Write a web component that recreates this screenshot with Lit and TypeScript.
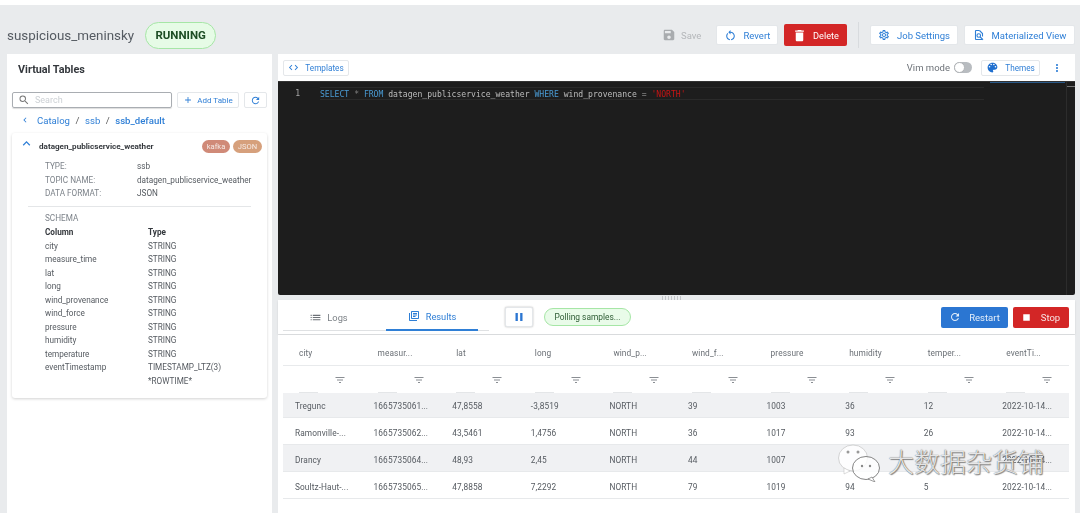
import { LitElement, html, css, svg } from "lit";
import { customElement } from "lit/decorators.js";

const P = {
  save: "M17 3H5c-1.11 0-2 .9-2 2v14c0 1.1.89 2 2 2h14c1.1 0 2-.9 2-2V7l-4-4zm-5 16c-1.66 0-3-1.34-3-3s1.34-3 3-3 3 1.34 3 3-1.34 3-3 3zm3-10H5V5h10v4z",
  del: "M6 19c0 1.1.9 2 2 2h8c1.1 0 2-.9 2-2V7H6v12zM19 4h-3.5l-1-1h-5l-1 1H5v2h14V4z",
  refresh: "M17.65 6.35C16.2 4.9 14.21 4 12 4c-4.42 0-7.99 3.58-7.99 8s3.57 8 7.99 8c3.73 0 6.84-2.55 7.73-6h-2.08c-.82 2.33-3.04 4-5.65 4-3.31 0-6-2.69-6-6s2.69-6 6-6c1.66 0 3.14.69 4.22 1.78L13 11h7V4l-2.35 2.35z",
  revert: "M12 5V2L8 6l4 4V7c3.31 0 6 2.69 6 6 0 2.97-2.17 5.43-5 5.91v2.02c3.95-.49 7-3.85 7-7.93 0-4.42-3.58-8-8-8zm-6 8c0-1.65.67-3.15 1.76-4.24L6.34 7.34A7.96 7.96 0 0 0 4 13c0 4.08 3.05 7.44 7 7.93v-2.02c-2.83-.48-5-2.94-5-5.91z",
  gear: "M19.43 12.98c.04-.32.07-.64.07-.98 0-.34-.03-.66-.07-.98l2.11-1.65c.19-.15.24-.42.12-.64l-2-3.46a.5.5 0 0 0-.61-.22l-2.49 1c-.52-.4-1.08-.73-1.69-.98l-.38-2.65A.488.488 0 0 0 14 2h-4c-.25 0-.46.18-.49.42l-.38 2.65c-.61.25-1.17.59-1.69.98l-2.49-1a.566.566 0 0 0-.18-.03c-.17 0-.34.09-.43.25l-2 3.46c-.13.22-.07.49.12.64l2.11 1.65c-.04.32-.07.65-.07.98 0 .33.03.66.07.98l-2.11 1.65c-.19.15-.24.42-.12.64l2 3.46a.5.5 0 0 0 .61.22l2.49-1c.52.4 1.08.73 1.69.98l.38 2.65c.03.24.24.42.49.42h4c.25 0 .46-.18.49-.42l.38-2.65c.61-.25 1.17-.59 1.69-.98l2.49 1c.06.02.12.03.18.03.17 0 .34-.09.43-.25l2-3.46c.12-.22.07-.49-.12-.64l-2.11-1.65zm-1.98-1.71c.04.31.05.52.05.73 0 .21-.02.43-.05.73l-.14 1.13.89.7 1.08.84-.7 1.21-1.27-.51-1.04-.42-.9.68c-.43.32-.84.56-1.25.73l-1.06.43-.16 1.13-.2 1.35h-1.4l-.19-1.35-.16-1.13-1.06-.43c-.43-.18-.83-.41-1.23-.71l-.91-.7-1.06.43-1.27.51-.7-1.21 1.08-.84.89-.7-.14-1.13c-.03-.31-.05-.54-.05-.74s.02-.43.05-.73l.14-1.13-.89-.7-1.08-.84.7-1.21 1.27.51 1.04.42.9-.68c.43-.32.84-.56 1.25-.73l1.06-.43.16-1.13.2-1.35h1.39l.19 1.35.16 1.13 1.06.43c.43.18.83.41 1.23.71l.91.7 1.06-.43 1.27-.51.7 1.21-1.07.85-.89.7.14 1.13zM12 8c-2.21 0-4 1.79-4 4s1.79 4 4 4 4-1.79 4-4-1.79-4-4-4zm0 6c-1.1 0-2-.9-2-2s.9-2 2-2 2 .9 2 2-.9 2-2 2z",
  palette: "M12 3c-4.97 0-9 4.03-9 9s4.03 9 9 9c.83 0 1.5-.67 1.5-1.5 0-.39-.15-.74-.39-1.01-.23-.26-.38-.61-.38-.99 0-.83.67-1.5 1.5-1.5H16c2.76 0 5-2.24 5-5 0-4.42-4.03-8-9-8zm-5.5 9c-.83 0-1.5-.67-1.5-1.5S5.67 9 6.5 9 8 9.67 8 10.5 7.33 12 6.5 12zm3-4C8.67 8 8 7.33 8 6.5S8.67 5 9.5 5s1.5.67 1.5 1.5S10.33 8 9.5 8zm5 0c-.83 0-1.5-.67-1.5-1.5S13.67 5 14.5 5s1.5.67 1.5 1.5S15.33 8 14.5 8zm3 4c-.83 0-1.5-.67-1.5-1.5S16.67 9 17.5 9s1.5.67 1.5 1.5-.67 1.5-1.5 1.5z",
  code: "M9.4 16.6L4.8 12l4.6-4.6L8 6l-6 6 6 6 1.4-1.4zm5.2 0l4.6-4.6-4.6-4.6L16 6l6 6-6 6-1.4-1.4z",
  more: "M12 8c1.1 0 2-.9 2-2s-.9-2-2-2-2 .9-2 2 .9 2 2 2zm0 2c-1.1 0-2 .9-2 2s.9 2 2 2 2-.9 2-2-.9-2-2-2zm0 6c-1.1 0-2 .9-2 2s.9 2 2 2 2-.9 2-2-.9-2-2-2z",
  list: "M3 13h2v-2H3v2zm0 4h2v-2H3v2zm0-8h2V7H3v2zm4 4h14v-2H7v2zm0 4h14v-2H7v2zM7 7v2h14V7H7z",
  books: "M4 6H2v14c0 1.1.9 2 2 2h14v-2H4V6zm16-4H8c-1.1 0-2 .9-2 2v12c0 1.1.9 2 2 2h12c1.1 0 2-.9 2-2V4c0-1.1-.9-2-2-2zm0 14H8V4h12v12zM10 9h8v2h-8zm0 3h5v2h-5zm0-6h8v2h-8z",
  filter: "M10 18h4v-2h-4v2zM3 6v2h18V6H3zm3 7h12v-2H6v2z",
  search: "M15.5 14h-.79l-.28-.27A6.47 6.47 0 0 0 16 9.5 6.5 6.5 0 1 0 9.5 16c1.61 0 3.09-.59 4.23-1.57l.27.28v.79l5 4.99L20.49 19l-4.99-5zm-6 0C7.01 14 5 11.99 5 9.5S7.01 5 9.5 5 14 7.01 14 9.5 11.99 14 9.5 14z",
  plus: "M19 13h-6v6h-2v-6H5v-2h6V5h2v6h6v2z",
  left: "M15.41 7.41L14 6l-6 6 6 6 1.41-1.41L10.83 12z",
  up: "M12 8l-6 6 1.41 1.41L12 10.83l4.59 4.58L18 14z",
  pause: "M6 19h4V5H6v14zm8-14v14h4V5h-4z",
  stop: "M6 6h12v12H6z",
};

const icon = (d: string, size: number, color: string) => html`<svg class="ic" width=${size} height=${size} viewBox="0 0 24 24" fill=${color}>${svg`<path d=${d}></path>`}</svg>`;

const BLUE = "#2f7fd6";
const SCHEMA = [
  ["city", "STRING"], ["measure_time", "STRING"], ["lat", "STRING"], ["long", "STRING"],
  ["wind_provenance", "STRING"], ["wind_force", "STRING"], ["pressure", "STRING"],
  ["humidity", "STRING"], ["temperature", "STRING"], ["eventTimestamp", "TIMESTAMP_LTZ(3)"], ["", "*ROWTIME*"],
];
const COLS = ["city", "measur...", "lat", "long", "wind_p...", "wind_f...", "pressure", "humidity", "temper...", "eventTi..."];
const ROWS = [
  ["Tregunc", "1665735061...", "47,8558", "-3,8519", "NORTH", "39", "1003", "36", "12", "2022-10-14..."],
  ["Ramonville-...", "1665735062...", "43,5461", "1,4756", "NORTH", "36", "1017", "93", "26", "2022-10-14..."],
  ["Drancy", "1665735064...", "48,93", "2,45", "NORTH", "44", "1007", "", "", "2022-10-14..."],
  ["Soultz-Haut-...", "1665735065...", "47,8858", "7,2292", "NORTH", "79", "1019", "94", "5", "2022-10-14..."],
];

@customElement("app-root")
export class AppRoot extends LitElement {
  static styles = css`
    :host { display: block; width: 1080px; height: 513px; overflow: hidden; background: #fff; font-family: Roboto, "Noto Sans", sans-serif; color: #3c4148; position: relative; }
    * { box-sizing: border-box; }
    .ic { display: block; flex: none; }
    .page { margin-top: 5px; height: 508px; background: #e9ebed; padding: 0 5px 0 7px; display: flex; flex-direction: column; filter: blur(0.5px); }
    .head { height: 49px; flex: none; display: flex; align-items: center; padding-top: 11px; }
    .title { font-size: 13.4px; color: #555b62; }
    .running { margin-left: 11px; width: 71px; height: 27px; border: 1px solid #a6e6a6; background: #e6fbe6; border-radius: 14px; color: #1d4d24; font-weight: 700; font-size: 11.5px; display: flex; align-items: center; justify-content: center; }
    .spacer { flex: 1; }
    .btn { display: flex; align-items: center; justify-content: center; gap: 7px; background: #fff; color: #2f7fd6; font-size: 9.5px; border-radius: 2px; height: 20px; border: 1px solid #e4e7ea; }
    .save { color: #b4b7ba; font-size: 9.5px; display: flex; align-items: center; gap: 5px; width: 54px; }
    .revert { width: 62px; }
    .delete { width: 63px; height: 22px; margin-left: 6px; background: #d32626; color: #fff; border: none; gap: 6px; }
    .delete span { font-size: 9.2px; }
    .vr { width: 1px; height: 26px; background: #d8dbde; margin: 0 11px; }
    .job { width: 88px; }
    .mat { width: 111px; margin-left: 6px; }
    .body { flex: 1; min-height: 0; display: grid; grid-template-columns: 265px 797px; gap: 6px; }
    .left { background: #fff; padding: 0 5px; display: flex; flex-direction: column; }
    .vt { font-size: 10.8px; font-weight: 700; color: #33373c; padding: 9px 6px 0; height: 38px; }
    .searchrow { display: flex; gap: 5px; height: 16px; }
    .search { width: 160px; border: 1px solid #a9adb2; border-radius: 2px; box-shadow: 0 1px 1px #ddd; display: flex; align-items: center; padding-left: 5px; gap: 5px; color: #ccd0d4; font-size: 9px; }
    .searchrow .btn { height: 16px; font-size: 8px; gap: 4px; }
    .add { width: 62px; } .rf { width: 23px; }
    .crumbs { display: flex; align-items: center; height: 24px; color: #2f7fd6; font-size: 9.6px; padding-left: 8px; }
    .crumbs .sep { color: #555; margin: 0 5.5px; }
    .crumbs b { font-weight: 500; }
    .card { margin-top: 1px; height: 265px; border-radius: 3px; box-shadow: 0 1px 3px rgba(0,0,0,.18); padding: 0 5px 0 8px; font-size: 8.2px; color: #555a60; }
    .cardhead { display: flex; align-items: center; height: 26px; }
    .cardhead .chev { margin: -6px -1px 0 -1px; }
    .cardhead .nm { font-weight: 700; color: #34383d; margin-left: 6px; font-size: 8.1px; flex: 1; }
    .pill { height: 13px; border-radius: 7px; color: #f5e9e4; font-size: 7.6px; display: flex; align-items: center; justify-content: center; }
    .kafka { background: #d08a78; width: 28px; margin-right: 3px; }
    .json { background: #d6a07c; width: 29px; }
    .meta { display: grid; grid-template-columns: 92px 1fr; padding: 1px 0 0 25px; line-height: 13.5px; }
    .meta .k { color: #7d838a; }
    .hr { height: 1px; background: #e4e6e8; margin: 5px 11px 0 8px; }
    .schema { color: #7d838a; padding: 5px 0 1px 25px; line-height: 13.5px; }
    .stbl { display: grid; grid-template-columns: 103px 1fr; padding-left: 25px; line-height: 13.55px; }
    .stbl .hd { font-weight: 700; color: #34383d; }
    .right { display: flex; flex-direction: column; min-height: 0; }
    .bar { height: 27px; flex: none; background: #fff; display: flex; align-items: center; padding: 0 5px; }
    .bar .btn { height: 16px; font-size: 8.2px; gap: 6px; }
    .tpl { width: 66px; }
    .vim { font-size: 9.5px; color: #6d7278; margin-right: 4px; }
    .toggle { width: 18px; height: 11px; border-radius: 6px; background: #b8bcc0; position: relative; margin-right: 9px; }
    .toggle i { position: absolute; left: 0; top: 0; width: 11px; height: 11px; border-radius: 50%; background: #fff; border: 1px solid #b0b3b6; }
    .themes { width: 59px; }
    .dots { margin: 0 7px 0 11px; }
    .editor { height: 214px; flex: none; background: #1d1d1d; display: flex; border-top: 1px solid #333; border-radius: 0 0 2px 2px; position: relative; font-family: "DejaVu Sans Mono", "Liberation Mono", monospace; font-size: 8.1px; }
    .ln { width: 42px; text-align: right; padding: 6px 20px 0 0; color: #a8a8a8; line-height: 11px; flex: none; }
    .code { width: 664px; height: 13px; margin-top: 5px; border-top: 1px solid #2a2a2a; border-bottom: 1px solid #2a2a2a; color: #bcbcbc; line-height: 12px; white-space: pre; }
    .kw { color: #4a9bd4; } .str { color: #c81414; } .op { color: #808080; }
    .mini { position: absolute; right: 0; top: 0; width: 9px; height: 100%; border-left: 1px solid #2c2c2c; }
    .mini i { display: block; height: 1px; background: #777; margin-top: 4px; }
    .overview { position: absolute; left: 712px; top: 0; width: 75px; height: 1px; background: #2a5a8a; }
    .split { height: 5px; flex: none; display: flex; justify-content: center; align-items: center; }
    .grip { width: 21px; height: 4px; margin-left: -8px; background: repeating-linear-gradient(90deg, #c4c6c9 0 1px, transparent 1px 3px); }
    .ctl { height: 34px; flex: none; background: #fff; display: flex; align-items: center; padding: 0 6px 0 5px; box-shadow: 0 1px 2px rgba(0,0,0,.1); }
    .tabs { display: flex; width: 206px; height: 28px; border-bottom: 1px solid #dfe1e3; }
    .tab { display: flex; align-items: center; justify-content: center; gap: 5px; font-size: 9.3px; height: 28px; color: #7d8287; }
    .tab.logs { width: 103px; padding-right: 12px; } .tab.res { width: 92px; color: #2f7fd6; border-bottom: 2px solid #2f7fd6; gap: 6px; }
    .pausebtn { width: 28px; margin-left: 16px; height: 20px; border-radius: 2px; box-shadow: 0 0 2px rgba(0,0,0,.3); }
    .polling { margin-left: 11px; width: 87px; height: 18px; border: 1px solid #a6e6a6; background: #e9fbe9; border-radius: 9px; font-size: 8.4px; color: #2e5c34; display: flex; align-items: center; justify-content: center; }
    .ctl .btn.restart { width: 67px; height: 21px; background: #2b76d2; color: #e4eefa; border: none; gap: 8px; }
    .ctl .btn.stop { width: 56px; height: 21px; background: #d32626; color: #f8e4e4; border: none; margin-left: 5px; gap: 8px; padding-right: 2px; }
    .tblwrap { flex: 1; margin-top: 1px; background: #fff; padding: 5px 6px 0 5px; }
    .tr { display: grid; grid-template-columns: repeat(10, 78.6px); font-size: 8.3px; letter-spacing: .1px; }
    .th { height: 26px; border-bottom: 1px solid #e8eaec; align-items: center; color: #6a6f75; }
    .th span { padding-left: 16px; line-height: 26px; }
    .fl { height: 27px; }
    .fl div { position: relative; padding-left: 51px; padding-top: 8px; }
    .fl i { position: absolute; left: 16px; bottom: 0; width: 19px; height: 1px; background: #e4e6e8; }
    .row { height: 27px; line-height: 27px; border-bottom: 1px solid #e7e9eb; color: #555a60; grid-template-rows: 26px; }
    .row.first { height: 25px; line-height: 25px; grid-template-rows: 24px; }
    .row.odd { background: #f0f1f3; }
    .row span { padding-left: 12px; padding-top: 2px; }
    .row.first span { padding-top: 1px; }
    .mark { position: absolute; left: 838px; top: 444px; display: flex; align-items: center; gap: 7px; pointer-events: none; }
    .mark .t { font-family: "Noto Sans CJK SC", sans-serif; font-weight: 300; font-size: 26px; color: rgba(255,255,255,.85); text-shadow: 0 0 1px #444, 1px 1px 1px #888; margin-top: -5px; }
  `;

  render() {
    return html`
      <div class="page">
        <div class="head">
          <div class="title">suspicious_meninsky</div>
          <div class="running">RUNNING</div>
          <div class="spacer"></div>
          <div class="save">${icon(P.save, 14, "#a9acaf")}Save</div>
          <div class="btn revert">${icon(P.revert, 13, BLUE)}Revert</div>
          <div class="btn delete">${icon(P.del, 15, "#fff")}<span>Delete</span></div>
          <div class="vr"></div>
          <div class="btn job">${icon(P.gear, 12, BLUE)}Job Settings</div>
          <div class="btn mat">
            <svg class="ic" width="12" height="12" viewBox="0 0 24 24" fill="none" stroke="#2f7fd6" stroke-width="2.2">
              <path d="M13 3H6a1 1 0 0 0-1 1v16a1 1 0 0 0 1 1h12"></path><path d="M13 3l6 6v6"></path>
              <circle cx="11.5" cy="13" r="3.6"></circle><path d="M14 15.5l6 6"></path>
            </svg>
            Materialized View
          </div>
        </div>
        <div class="body">
          <div class="left">
            <div class="vt">Virtual Tables</div>
            <div class="searchrow">
              <div class="search">${icon(P.search, 12, "#777")}Search</div>
              <div class="btn add">${icon(P.plus, 10, BLUE)}Add Table</div>
              <div class="btn rf">${icon(P.refresh, 11, BLUE)}</div>
            </div>
            <div class="crumbs">
              ${icon(P.left, 10, BLUE)}<span style="width:7px"></span>
              <span>Catalog</span><span class="sep">/</span><span>ssb</span><span class="sep">/</span><b>ssb_default</b>
            </div>
            <div class="card">
              <div class="cardhead">
                <div class="chev">${icon(P.up, 15, BLUE)}</div>
                <div class="nm">datagen_publicservice_weather</div>
                <div class="pill kafka">kafka</div><div class="pill json">JSON</div>
              </div>
              <div class="meta">
                <span class="k">TYPE:</span><span>ssb</span>
                <span class="k">TOPIC NAME:</span><span>datagen_publicservice_weather</span>
                <span class="k">DATA FORMAT:</span><span>JSON</span>
              </div>
              <div class="hr"></div>
              <div class="schema">SCHEMA</div>
              <div class="stbl">
                <span class="hd">Column</span><span class="hd">Type</span>
                ${SCHEMA.map(([a, b]) => html`<span>${a}</span><span>${b}</span>`)}
              </div>
            </div>
          </div>
          <div class="right">
            <div class="bar">
              <div class="btn tpl">${icon(P.code, 11, BLUE)}Templates</div>
              <div class="spacer"></div>
              <span class="vim">Vim mode</span>
              <div class="toggle"><i></i></div>
              <div class="btn themes">${icon(P.palette, 13, "#1f6fcf")}Themes</div>
              <div class="dots">${icon(P.more, 12, BLUE)}</div>
            </div>
            <div class="editor">
              <div class="ln">1</div>
              <div class="code"><span class="kw">SELECT</span> <span class="op">*</span> <span class="kw">FROM</span> datagen_publicservice_weather <span class="kw">WHERE</span> wind_provenance <span class="op">=</span> <span class="str">'NORTH'</span></div>
              <div class="overview"></div>
              <div class="mini"><i></i></div>
            </div>
            <div class="split"><div class="grip"></div></div>
            <div class="ctl">
              <div class="tabs">
                <div class="tab logs">${icon(P.list, 13, "#6c7177")}Logs</div>
                <div class="tab res">${icon(P.books, 12, BLUE)}Results</div>
              </div>
              <div class="btn pausebtn">${icon(P.pause, 14, "#2b76d2")}</div>
              <div class="polling">Polling samples...</div>
              <div class="spacer"></div>
              <div class="btn restart">${icon(P.refresh, 12, "#e4eefa")}Restart</div>
              <div class="btn stop">${icon(P.stop, 13, "#fff")}Stop</div>
            </div>
            <div class="tblwrap">
              <div class="tr th">${COLS.map((c) => html`<span>${c}</span>`)}</div>
              <div class="tr fl">${COLS.map(() => html`<div>${icon(P.filter, 12, "#8a8e93")}<i></i></div>`)}</div>
              ${ROWS.map((r, i) => html`<div class="tr row ${i % 2 ? "" : "odd"} ${i === 0 ? "first" : ""}">${r.map((c) => html`<span>${c}</span>`)}</div>`)}
            </div>
          </div>
        </div>
      </div>
      <div class="mark">
        <svg width="43" height="38" viewBox="0 0 43 38">
          <ellipse cx="15" cy="14" rx="14.5" ry="13" fill="#fff" fill-opacity=".85" stroke="#bbb" stroke-width=".6"></ellipse>
          <path d="M6 24l0 6 6-3z" fill="#fff" stroke="#bbb" stroke-width=".5"></path>
          <ellipse cx="28" cy="24" rx="13.5" ry="11.5" fill="#fff" fill-opacity=".8" stroke="#777" stroke-width=".9"></ellipse>
          <path d="M34 33l3 5-7-3z" fill="#fff" stroke="#777" stroke-width=".7"></path>
          <circle cx="10" cy="8" r="1.5" fill="#999"></circle><circle cx="20" cy="8" r="1.5" fill="#999"></circle>
          <circle cx="24" cy="22" r="1.2" fill="#888"></circle><circle cx="32" cy="22" r="1.2" fill="#888"></circle>
        </svg>
        <span class="t">大数据杂货铺</span>
      </div>
    `;
  }
}
